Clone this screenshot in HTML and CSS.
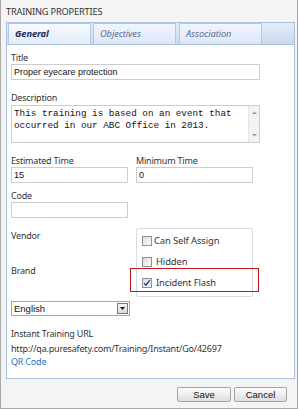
FILE: index.html
```html
<!DOCTYPE html>
<html>
<head>
<meta charset="utf-8">
<link rel="stylesheet" href="styles.css">
</head>
<body>
<div class="window">
  <div class="heading">TRAINING PROPERTIES</div>
  <div class="panel">
    <div class="tabstrip">
      <div class="tab active">General</div>
      <div class="tab">Objectives</div>
      <div class="tab">Association</div>
    </div>
    <div class="content">
      <div class="lbl">Title</div>
      <div class="field wide">Proper eyecare protection</div>

      <div class="lbl gap-lg">Description</div>
      <div class="textarea">
        <div class="ta-text">This training is based on an event that occurred in our ABC Office in 2013.</div>
        <div class="ta-scroll">
          <svg width="7" height="5" viewBox="0 0 7 5"><path d="M1 4 L3.5 1.5 L6 4 Z" fill="#9a9a9a"/></svg>
          <svg width="7" height="5" viewBox="0 0 7 5"><path d="M1 1 L3.5 3.5 L6 1 Z" fill="#9a9a9a"/></svg>
        </div>
      </div>

      <div class="cols gap-lg">
        <div>
          <div class="lbl">Estimated Time</div>
          <div class="field narrow">15</div>
        </div>
        <div>
          <div class="lbl">Minimum Time</div>
          <div class="field narrow">0</div>
        </div>
      </div>

      <div class="lbl gap-sm">Code</div>
      <div class="field narrow"></div>

      <div class="cols options-row">
        <div class="left-col">
          <div class="lbl vendor">Vendor</div>
          <div class="lbl brand">Brand</div>
        </div>
        <div class="checkgroup">
          <div class="check-row"><span class="cb"></span><span class="cb-text">Can Self Assign</span></div>
          <div class="check-row indent"><span class="cb"></span><span class="cb-text">Hidden</span></div>
          <div class="check-row indent"><span class="cb checked"><svg width="8" height="8" viewBox="0 0 8 8"><path d="M1.2 4.2 L3 6.2 L6.8 1.2" stroke="#2b3f86" stroke-width="1.4" fill="none"/></svg></span><span class="cb-text">Incident Flash</span></div>
          <div class="highlight"></div>
        </div>
      </div>

      <div class="select">
        <span class="sel-text">English</span>
        <span class="sel-btn"><svg width="5" height="3" viewBox="0 0 5 3"><path d="M0 0 H5 L2.5 3 Z" fill="#111"/></svg></span>
      </div>

      <div class="lbl gap-lg">Instant Training URL</div>
      <div class="lbl url">http://qa.puresafety.com/Training/Instant/Go/42697</div>
      <div class="lbl"><a class="link" href="#">QR Code</a></div>
    </div>
  </div>
  <div class="buttons">
    <button class="btn save">Save</button>
    <button class="btn cancel">Cancel</button>
  </div>
</div>
</body>
</html>
```
FILE: styles.css
```css
* { box-sizing: border-box; }
html, body { margin: 0; padding: 0; background: #ffffff; }
body { width: 300px; height: 409px; overflow: hidden; font-family: "Noto Sans", "Open Sans", sans-serif; }

.window {
  width: 298px;
  height: 409px;
  background: #f4f4f4;
  border-left: 1px solid #a9a9a9;
  border-right: 1px solid #a9a9a9;
  border-bottom: 1px solid #a9a9a9;
  padding: 0 2px 0 5px;
}

.heading {
  font-size: 9.2px;
  line-height: 13px;
  color: #333;
  padding-top: 5px;
  height: 22px;
  letter-spacing: -0.15px;
}

.panel {
  border: 1px solid #a9c1e3;
  background: #fff;
  height: 357px;
}

.tabstrip {
  height: 22px;
  display: flex;
  gap: 2px;
  padding: 0 0 0 1px;
  background: linear-gradient(#e4ecf8, #cad9ee);
  border-bottom: 1px solid #a9c1e3;
}
.tabstrip .tab:nth-child(3) { margin-left: 1px; }

.tab {
  width: 83px;
  height: 21px;
  border: 1px solid #b3c8e7;
  border-bottom: none;
  background: linear-gradient(#f2f6fc, #dbe6f6);
  font-size: 9.3px;
  font-style: italic;
  color: #5a6f96;
  line-height: 20px;
  padding-left: 6px;
  letter-spacing: -0.1px;
}
.tab.active {
  font-weight: bold;
  color: #1c2b5a;
  background: linear-gradient(#f8fbfe, #e3ecf9);
}

.content {
  padding: 6px 0 0 4px;
}

.lbl {
  font-size: 9px;
  line-height: 13px;
  color: #333;
  height: 13px;
  white-space: nowrap;
  letter-spacing: -0.2px;
}
.gap-lg { margin-top: 11px; }
.gap-sm { margin-top: 6px; }

.field {
  height: 16px;
  border: 1px solid #cdcdcd;
  background: #fff;
  font-family: "Liberation Sans", Arial, sans-serif;
  font-size: 9px;
  line-height: 14px;
  padding-left: 2px;
  color: #111;
}
.field.wide { width: 249px; }
.field.narrow { width: 117px; }

.textarea {
  margin-top: 1px;
  width: 249px;
  height: 38px;
  border: 1px solid #cdcdcd;
  display: flex;
}
.ta-text {
  flex: 1;
  font-family: "Liberation Mono", "Courier New", monospace;
  font-size: 9.3px;
  line-height: 11.7px;
  color: #111;
  padding: 2px 0 0 2px;
}
.ta-scroll {
  width: 11px;
  background: #f3f3f3;
  border-left: 1px solid #e6e6e6;
  display: flex;
  flex-direction: column;
  justify-content: space-between;
  align-items: center;
  padding: 4px 0 4px 0;
}

.cols {
  display: grid;
  grid-template-columns: 117px 117px;
  column-gap: 8px;
}

.options-row { margin-top: 10px; }
.vendor { margin-top: 1px; }
.brand { margin-top: 22px; }

.checkgroup {
  position: relative;
  height: 69px;
  border: 1px solid #d6dde6;
  border-radius: 2px;
  padding-top: 1px;
}
.check-row {
  display: flex;
  align-items: center;
  height: 21px;
  padding-left: 5px;
}
.cb {
  width: 10px;
  height: 10px;
  border: 1px solid #8f8f8f;
  background: linear-gradient(135deg, #dcdcdc, #fbfbfb);
  display: flex;
  align-items: center;
  justify-content: center;
}
.cb-text {
  font-size: 9.4px;
  color: #333;
  margin-left: 2px;
  white-space: nowrap;
  letter-spacing: -0.1px;
}
.check-row.indent .cb-text { margin-left: 4px; }

.highlight {
  position: absolute;
  left: -7px;
  top: 39px;
  width: 129px;
  height: 24px;
  border: 1px solid #c3161c;
}

.select {
  margin-top: 4px;
  width: 119px;
  height: 15px;
  border: 1px solid #a6a6a6;
  display: flex;
  align-items: center;
  justify-content: space-between;
  padding: 0 1px 0 2px;
}
.sel-text {
  font-family: "Liberation Sans", Arial, sans-serif;
  font-size: 9.5px;
  color: #111;
}
.sel-btn {
  width: 11px;
  height: 11px;
  border: 1px solid #7a7a7a;
  background: linear-gradient(#f4f4f4, #d8d8d8);
  display: flex;
  align-items: center;
  justify-content: center;
}

.url { margin-top: 2px; }
.link { color: #2a70c4; text-decoration: none; }

.buttons {
  display: flex;
  justify-content: flex-end;
  gap: 3px;
  margin-top: 8px;
  padding-right: 8px;
}
.btn {
  height: 15px;
  border: 1px solid #a3a3a3;
  border-radius: 2px;
  background: linear-gradient(#fdfdfd, #dedede);
  font-family: "Liberation Sans", Arial, sans-serif;
  font-size: 9.5px;
  color: #111;
  padding: 0;
  line-height: 13px;
}
.btn.save { width: 54px; }
.btn.cancel { width: 53px; }
```
